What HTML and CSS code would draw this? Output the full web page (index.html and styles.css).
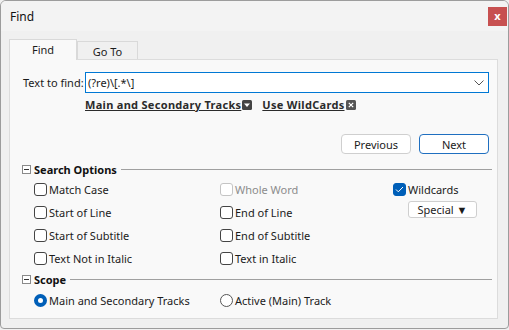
FILE: index.html
```html
<!DOCTYPE html>
<html>
<head>
<meta charset="utf-8">
<link rel="stylesheet" href="styles.css">
</head>
<body>
<div class="window">
  <div class="titlebar">
    <span class="title">Find</span>
    <span class="close">x</span>
  </div>
  <div class="body">
    <div class="tabs">
      <div class="tab active">Find</div>
      <div class="tab">Go To</div>
    </div>
    <div class="panel">
      <div class="find-row">
        <span class="find-label">Text to find:</span>
        <div class="combo">
          <span class="combo-text">(?re)\[.*\]</span>
          <svg class="chev" width="10" height="6" viewBox="0 0 10 6"><path d="M0.5 0.5 L5 5 L9.5 0.5" fill="none" stroke="#555" stroke-width="1"/></svg>
        </div>
      </div>
      <div class="links">
        <span class="link">Main and Secondary Tracks</span>
        <span class="ico"><svg width="10" height="10" viewBox="0 0 10 10"><rect width="10" height="10" rx="1.5" fill="#444"/><path d="M2 3.5 L8 3.5 L5 7 Z" fill="#fff"/></svg></span>
        <span class="link link2">Use WildCards</span>
        <span class="ico"><svg width="10" height="10" viewBox="0 0 10 10"><rect width="10" height="10" rx="1.5" fill="#555"/><path d="M2.8 2.8 L7.2 7.2 M7.2 2.8 L2.8 7.2" stroke="#fff" stroke-width="1.2"/></svg></span>
      </div>
      <div class="buttons">
        <span class="btn">Previous</span>
        <span class="btn primary">Next</span>
      </div>
      <div class="group-head">
        <span class="minus"></span>
        <span class="group-title">Search Options</span>
        <span class="rule"></span>
      </div>
      <div class="options">
        <div class="opt"><span class="cb"></span>Match Case</div>
        <div class="opt disabled"><span class="cb"></span>Whole Word</div>
        <div class="opt"><span class="cb checked"><svg width="9" height="7" viewBox="0 0 9 7"><path d="M1 3.5 L3.3 5.8 L8 1" fill="none" stroke="#fff" stroke-width="1"/></svg></span>Wildcards</div>
        <div class="opt"><span class="cb"></span>Start of Line</div>
        <div class="opt"><span class="cb"></span>End of Line</div>
        <div class="opt special-cell"><span class="special">Special ▼</span></div>
        <div class="opt"><span class="cb"></span>Start of Subtitle</div>
        <div class="opt"><span class="cb"></span>End of Subtitle</div>
        <div class="opt"></div>
        <div class="opt"><span class="cb"></span>Text Not in Italic</div>
        <div class="opt"><span class="cb"></span>Text in Italic</div>
        <div class="opt"></div>
      </div>
      <div class="group-head scope-head">
        <span class="minus"></span>
        <span class="group-title">Scope</span>
        <span class="rule"></span>
      </div>
      <div class="radios">
        <div class="opt"><span class="rb on"></span>Main and Secondary Tracks</div>
        <div class="opt"><span class="rb"></span>Active (Main) Track</div>
      </div>
    </div>
  </div>
</div>
</body>
</html>
```

FILE: styles.css
```css
* { box-sizing: border-box; }
html, body { margin: 0; padding: 0; background: #f0f0f0; }
body {
  font-family: "Noto Sans", "Liberation Sans", sans-serif;
  font-size: 11px;
  color: #1b1b1b;
}
.window {
  width: 509px;
  height: 329px;
  border: 1px solid #9c9c9c;
  border-radius: 6px 6px 4px 4px;
  background: #f0f0f0;
  overflow: hidden;
  display: flex;
  flex-direction: column;
}
.titlebar {
  height: 30px;
  background: #f3f3f3;
  display: flex;
  align-items: center;
  justify-content: space-between;
  padding: 0 1px 0 9px;
}
.title { font-size: 12px; color: #111; }
.close {
  width: 19px;
  height: 19px;
  background: #c75050;
  color: #fff;
  font-weight: bold;
  font-size: 11px;
  display: flex;
  align-items: center;
  justify-content: center;
  line-height: 1;
  padding-bottom: 2px;
}
.body {
  flex: 1;
  padding: 8px 10px 0 8px;
  display: flex;
  flex-direction: column;
}
.tabs {
  display: flex;
  align-items: flex-end;
  height: 20px;
  position: relative;
  z-index: 1;
}
.tab {
  height: 18px;
  width: 61px;
  border: 1px solid #d9d9d9;
  border-bottom: none;
  background: #f0f0f0;
  display: flex;
  align-items: center;
  justify-content: center;
  padding-top: 1px;
}
.tab.active {
  height: 21px;
  width: 68px;
  background: #f9f9f9;
  margin-bottom: -1px;
  padding-bottom: 3px;
}
.panel {
  height: 260px;
  background: #f9f9f9;
  border: 1px solid #dcdcdc;
  display: flex;
  flex-direction: column;
}
.find-row {
  margin-top: 12px;
  height: 21px;
  display: flex;
  align-items: center;
  padding-left: 13px;
}
.find-label { width: 62px; }
.combo {
  width: 404px;
  height: 21px;
  border: 1px solid #0078d4;
  background: #fff;
  display: flex;
  align-items: center;
  justify-content: space-between;
  padding: 0 4px 0 2px;
}
.chev { margin-top: 1px; }
.links {
  height: 22px;
  display: flex;
  align-items: center;
  padding-left: 75px;
}
.link {
  font-weight: bold;
  text-decoration: underline;
  color: #2b2b2b;
  letter-spacing: 0.3px;
}
.link2 { margin-left: 10px; }
.ico { display: flex; margin-left: 1px; margin-top: 1px; }
.buttons {
  margin-top: 19px;
  height: 20px;
  display: flex;
  justify-content: flex-end;
  gap: 8px;
  padding-right: 8px;
}
.btn {
  width: 70px;
  height: 20px;
  border: 1px solid #cfcfcf;
  border-radius: 4px;
  background: #fff;
  display: flex;
  align-items: center;
  justify-content: center;
}
.btn.primary { border-color: #1f6fc0; }
.group-head {
  margin-top: 7px;
  height: 16px;
  display: flex;
  align-items: center;
  padding-left: 12px;
  padding-right: 5px;
}
.minus {
  width: 9px;
  height: 9px;
  border: 1px solid #8a8a8a;
  background: #fff;
  position: relative;
  margin-right: 3px;
}
.minus::after {
  content: "";
  position: absolute;
  left: 1px;
  right: 1px;
  top: 3px;
  height: 1px;
  background: #333;
}
.group-title { font-weight: bold; color: #111; }
.rule {
  flex: 1;
  height: 1px;
  background: #a0a0a0;
  margin-left: 4px;
}
.options {
  margin-top: 1px;
  display: grid;
  grid-template-columns: 186px 173px 1fr;
  grid-auto-rows: 23px;
  padding-left: 24px;
}
.opt {
  display: flex;
  align-items: center;
  white-space: nowrap;
}
.opt.disabled { color: #8c8c8c; }
.cb {
  width: 13px;
  height: 13px;
  border: 1px solid #444;
  border-radius: 3px;
  background: #fff;
  margin-right: 2px;
  display: flex;
  align-items: center;
  justify-content: center;
}
.disabled .cb { border-color: #c4c4c4; }
.cb.checked { background: #005fb8; border-color: #005fb8; }
.special-cell { align-items: flex-start; padding-top: 0; padding-left: 15px; }
.special {
  width: 69px;
  height: 17px;
  border: 1px solid #cfcfcf;
  border-radius: 3px;
  background: #fff;
  display: flex;
  align-items: center;
  justify-content: center;
}
.scope-head { margin-top: 1px; }
.radios {
  margin-top: 2px;
  height: 22px;
  display: grid;
  grid-template-columns: 186px 1fr;
  padding-left: 24px;
}
.rb {
  width: 13px;
  height: 13px;
  border-radius: 50%;
  border: 1px solid #555;
  background: #fff;
  margin-right: 2px;
}
.rb.on {
  border: 4px solid #005fb8;
  background: #fff;
}
```
